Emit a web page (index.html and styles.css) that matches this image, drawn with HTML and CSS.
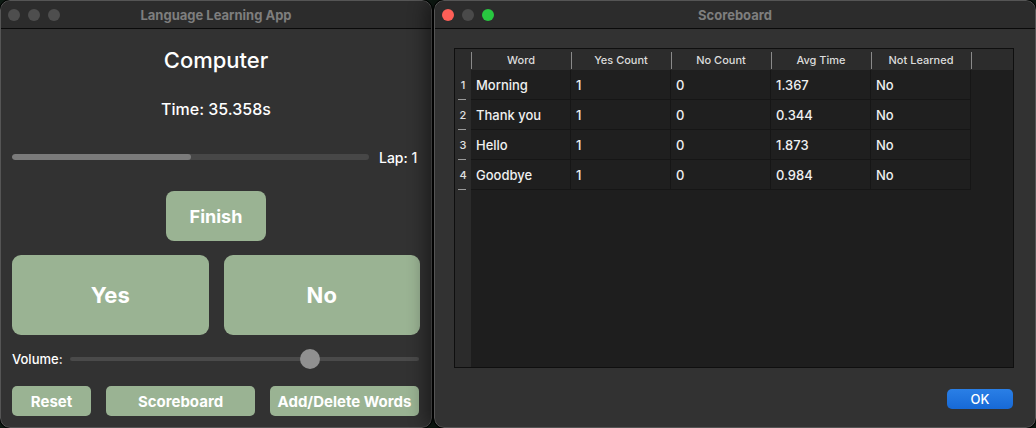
FILE: index.html
```html
<!DOCTYPE html>
<html>
<head>
<meta charset="utf-8">
<link rel="stylesheet" href="styles.css">
</head>
<body>
<div class="desktop">
  <div class="window win-left">
    <div class="titlebar">
      <div class="lights">
        <span class="light grey"></span><span class="light grey"></span><span class="light grey"></span>
      </div>
      <div class="title">Language Learning App</div>
    </div>
    <div class="app">
      <div class="word">Computer</div>
      <div class="time">Time: 35.358s</div>
      <div class="progress-row">
        <div class="track"><div class="fill" style="width:50%"></div></div>
        <div class="lap">Lap: 1</div>
      </div>
      <div class="finish-row"><div class="btn finish">Finish</div></div>
      <div class="yn-row">
        <div class="btn big">Yes</div>
        <div class="btn big">No</div>
      </div>
      <div class="volume-row">
        <div class="vol-label">Volume:</div>
        <div class="slider"><div class="thumb" style="left:230px"></div></div>
      </div>
      <div class="bottom-row">
        <div class="btn small reset">Reset</div>
        <div class="btn small wide">Scoreboard</div>
        <div class="btn small wide">Add/Delete Words</div>
      </div>
    </div>
  </div>
  <div class="window win-right">
    <div class="titlebar">
      <div class="lights">
        <span class="light red"></span><span class="light grey"></span><span class="light green"></span>
      </div>
      <div class="title">Scoreboard</div>
    </div>
    <div class="score">
      <div class="table">
        <div class="hcorner"></div>
        <div class="hcell">Word</div>
        <div class="hcell">Yes Count</div>
        <div class="hcell">No Count</div>
        <div class="hcell">Avg Time</div>
        <div class="hcell">Not Learned</div>
        <div class="hrest"></div>

        <div class="vh">1</div>
        <div class="cell">Morning</div><div class="cell">1</div><div class="cell">0</div><div class="cell">1.367</div><div class="cell">No</div><div class="rest"></div>

        <div class="vh">2</div>
        <div class="cell">Thank you</div><div class="cell">1</div><div class="cell">0</div><div class="cell">0.344</div><div class="cell">No</div><div class="rest"></div>

        <div class="vh">3</div>
        <div class="cell">Hello</div><div class="cell">1</div><div class="cell">0</div><div class="cell">1.873</div><div class="cell">No</div><div class="rest"></div>

        <div class="vh">4</div>
        <div class="cell">Goodbye</div><div class="cell">1</div><div class="cell">0</div><div class="cell">0.984</div><div class="cell">No</div><div class="rest"></div>

        <div class="vh-empty"></div>
        <div class="empty"></div>
      </div>
      <div class="ok-row"><div class="ok">OK</div></div>
    </div>
  </div>
</div>
</body>
</html>
```
FILE: styles.css
```css
* { box-sizing: border-box; }
html, body { margin: 0; padding: 0; }
body {
  width: 1036px;
  height: 428px;
  overflow: hidden;
  background: #0e1a13;
  font-family: Inter, "Noto Sans", "Liberation Sans", sans-serif;
  color: #fff;
}
.desktop {
  display: flex;
  gap: 2px;
  height: 428px;
}
.window {
  background: #323232;
  border: 1px solid #555;
  outline: 1px solid #000;
  border-radius: 10px;
  overflow: hidden;
  height: 428px;
  display: flex;
  flex-direction: column;
}
.win-left { width: 432px; }
.win-right {
  width: 602px;
  position: relative;
  z-index: 1;
  box-shadow: -8px 0 18px rgba(0,0,0,0.45);
}
.titlebar {
  height: 28px;
  flex: none;
  background: #2c2c2c;
  border-bottom: 1px solid #0a0a0a;
  display: flex;
  align-items: center;
  position: relative;
}
.lights {
  display: flex;
  gap: 8px;
  padding-left: 7px;
}
.light {
  width: 12px;
  height: 12px;
  border-radius: 50%;
  background: #4e4e4e;
}
.light.red { background: #fe5f57; }
.light.green { background: #28c840; }
.win-right .light.grey { background: #4a4a4a; }
.title {
  position: absolute;
  left: 0; right: 0;
  top: 0; bottom: 0;
  display: flex;
  align-items: center;
  justify-content: center;
  font-size: 13px;
  font-weight: 700;
  color: #7e7e7e;
}

/* left app */
.app {
  padding: 0 11px;
  display: flex;
  flex-direction: column;
}
.word {
  margin-top: 18px;
  text-align: center;
  font-size: 22px;
  line-height: 26px;
  font-weight: 500;
}
.time {
  margin-top: 26px;
  text-align: center;
  font-size: 16px;
  line-height: 20px;
  font-weight: 500;
}
.progress-row {
  margin-top: 28px;
  height: 20px;
  display: flex;
  align-items: center;
  gap: 10px;
}
.track {
  width: 357px;
  height: 6px;
  border-radius: 3px;
  background: #474747;
  overflow: hidden;
}
.fill {
  height: 100%;
  background: #7b7b7b;
  border-radius: 3px;
}
.lap {
  font-size: 14px;
  font-weight: 500;
}
.btn {
  background: #9ab393;
  color: #fff;
  font-weight: 700;
  display: flex;
  align-items: center;
  justify-content: center;
}
.finish-row {
  margin-top: 24px;
  display: flex;
  justify-content: center;
}
.finish {
  width: 100px;
  height: 50px;
  border-radius: 8px;
  font-size: 18px;
}
.yn-row {
  margin-top: 14px;
  display: flex;
  gap: 15px;
}
.big {
  width: 197px;
  height: 80px;
  border-radius: 9px;
  font-size: 22px;
}
.volume-row {
  margin-top: 12px;
  height: 24px;
  display: flex;
  align-items: center;
}
.vol-label {
  width: 58px;
  font-size: 13px;
  font-weight: 500;
}
.slider {
  position: relative;
  width: 349px;
  height: 4px;
  border-radius: 2px;
  background: #4a4a4a;
}
.thumb {
  position: absolute;
  top: -8px;
  width: 20px;
  height: 20px;
  border-radius: 50%;
  background: #909090;
}
.bottom-row {
  margin-top: 15px;
  display: flex;
  gap: 15px;
}
.small {
  height: 30px;
  border-radius: 5px;
  font-size: 15px;
}
.reset { width: 79px; }
.wide { width: 149px; }

/* scoreboard */
.score {
  padding: 19px 20px 0 19px;
  display: flex;
  flex-direction: column;
}
.table {
  width: 560px;
  height: 320px;
  border: 1px solid #0f0f0f;
  background: #1e1e1e;
  display: grid;
  grid-template-columns: 16px repeat(5, 100px) 1fr;
  grid-template-rows: 21px repeat(4, 30px) 1fr;
}
.hcorner, .hrest { background: #2c2c2c; }
.hcell {
  background: #2c2c2c;
  font-size: 11px;
  font-weight: 500;
  color: #dcdcdc;
  display: flex;
  align-items: center;
  justify-content: center;
  position: relative;
}
.hcell::before {
  content: "";
  position: absolute;
  left: 0;
  top: 3px;
  bottom: 1px;
  width: 1px;
  background: #8a8a8a;
}
.hcell:nth-child(6)::after {
  content: "";
  position: absolute;
  right: -1px;
  top: 3px;
  bottom: 1px;
  width: 1px;
  background: #8a8a8a;
}
.vh {
  background: #2b2b2b;
  font-size: 11px;
  font-weight: 500;
  color: #e0e0e0;
  display: flex;
  align-items: center;
  justify-content: center;
  position: relative;
}
.vh::after {
  content: "";
  position: absolute;
  left: 3px;
  width: 8px;
  bottom: 0;
  height: 1px;
  background: #9a9a9a;
}
.vh-empty { background: #2b2b2b; }
.empty { grid-column: 2 / -1; }
.cell {
  background: #1f1f1f;
  border-right: 1px solid #161616;
  border-bottom: 1px solid #161616;
  font-size: 13px;
  font-weight: 500;
  color: #f0f0f0;
  display: flex;
  align-items: center;
  padding-left: 5px;
}
.rest { background: #1e1e1e; }
.ok-row {
  margin-top: 21px;
  display: flex;
  justify-content: flex-end;
  padding-right: 2px;
}
.ok {
  width: 66px;
  height: 20px;
  border-radius: 5px;
  background: linear-gradient(#2a7fe6, #1769d6);
  font-size: 13px;
  font-weight: 500;
  display: flex;
  align-items: center;
  justify-content: center;
}
```
